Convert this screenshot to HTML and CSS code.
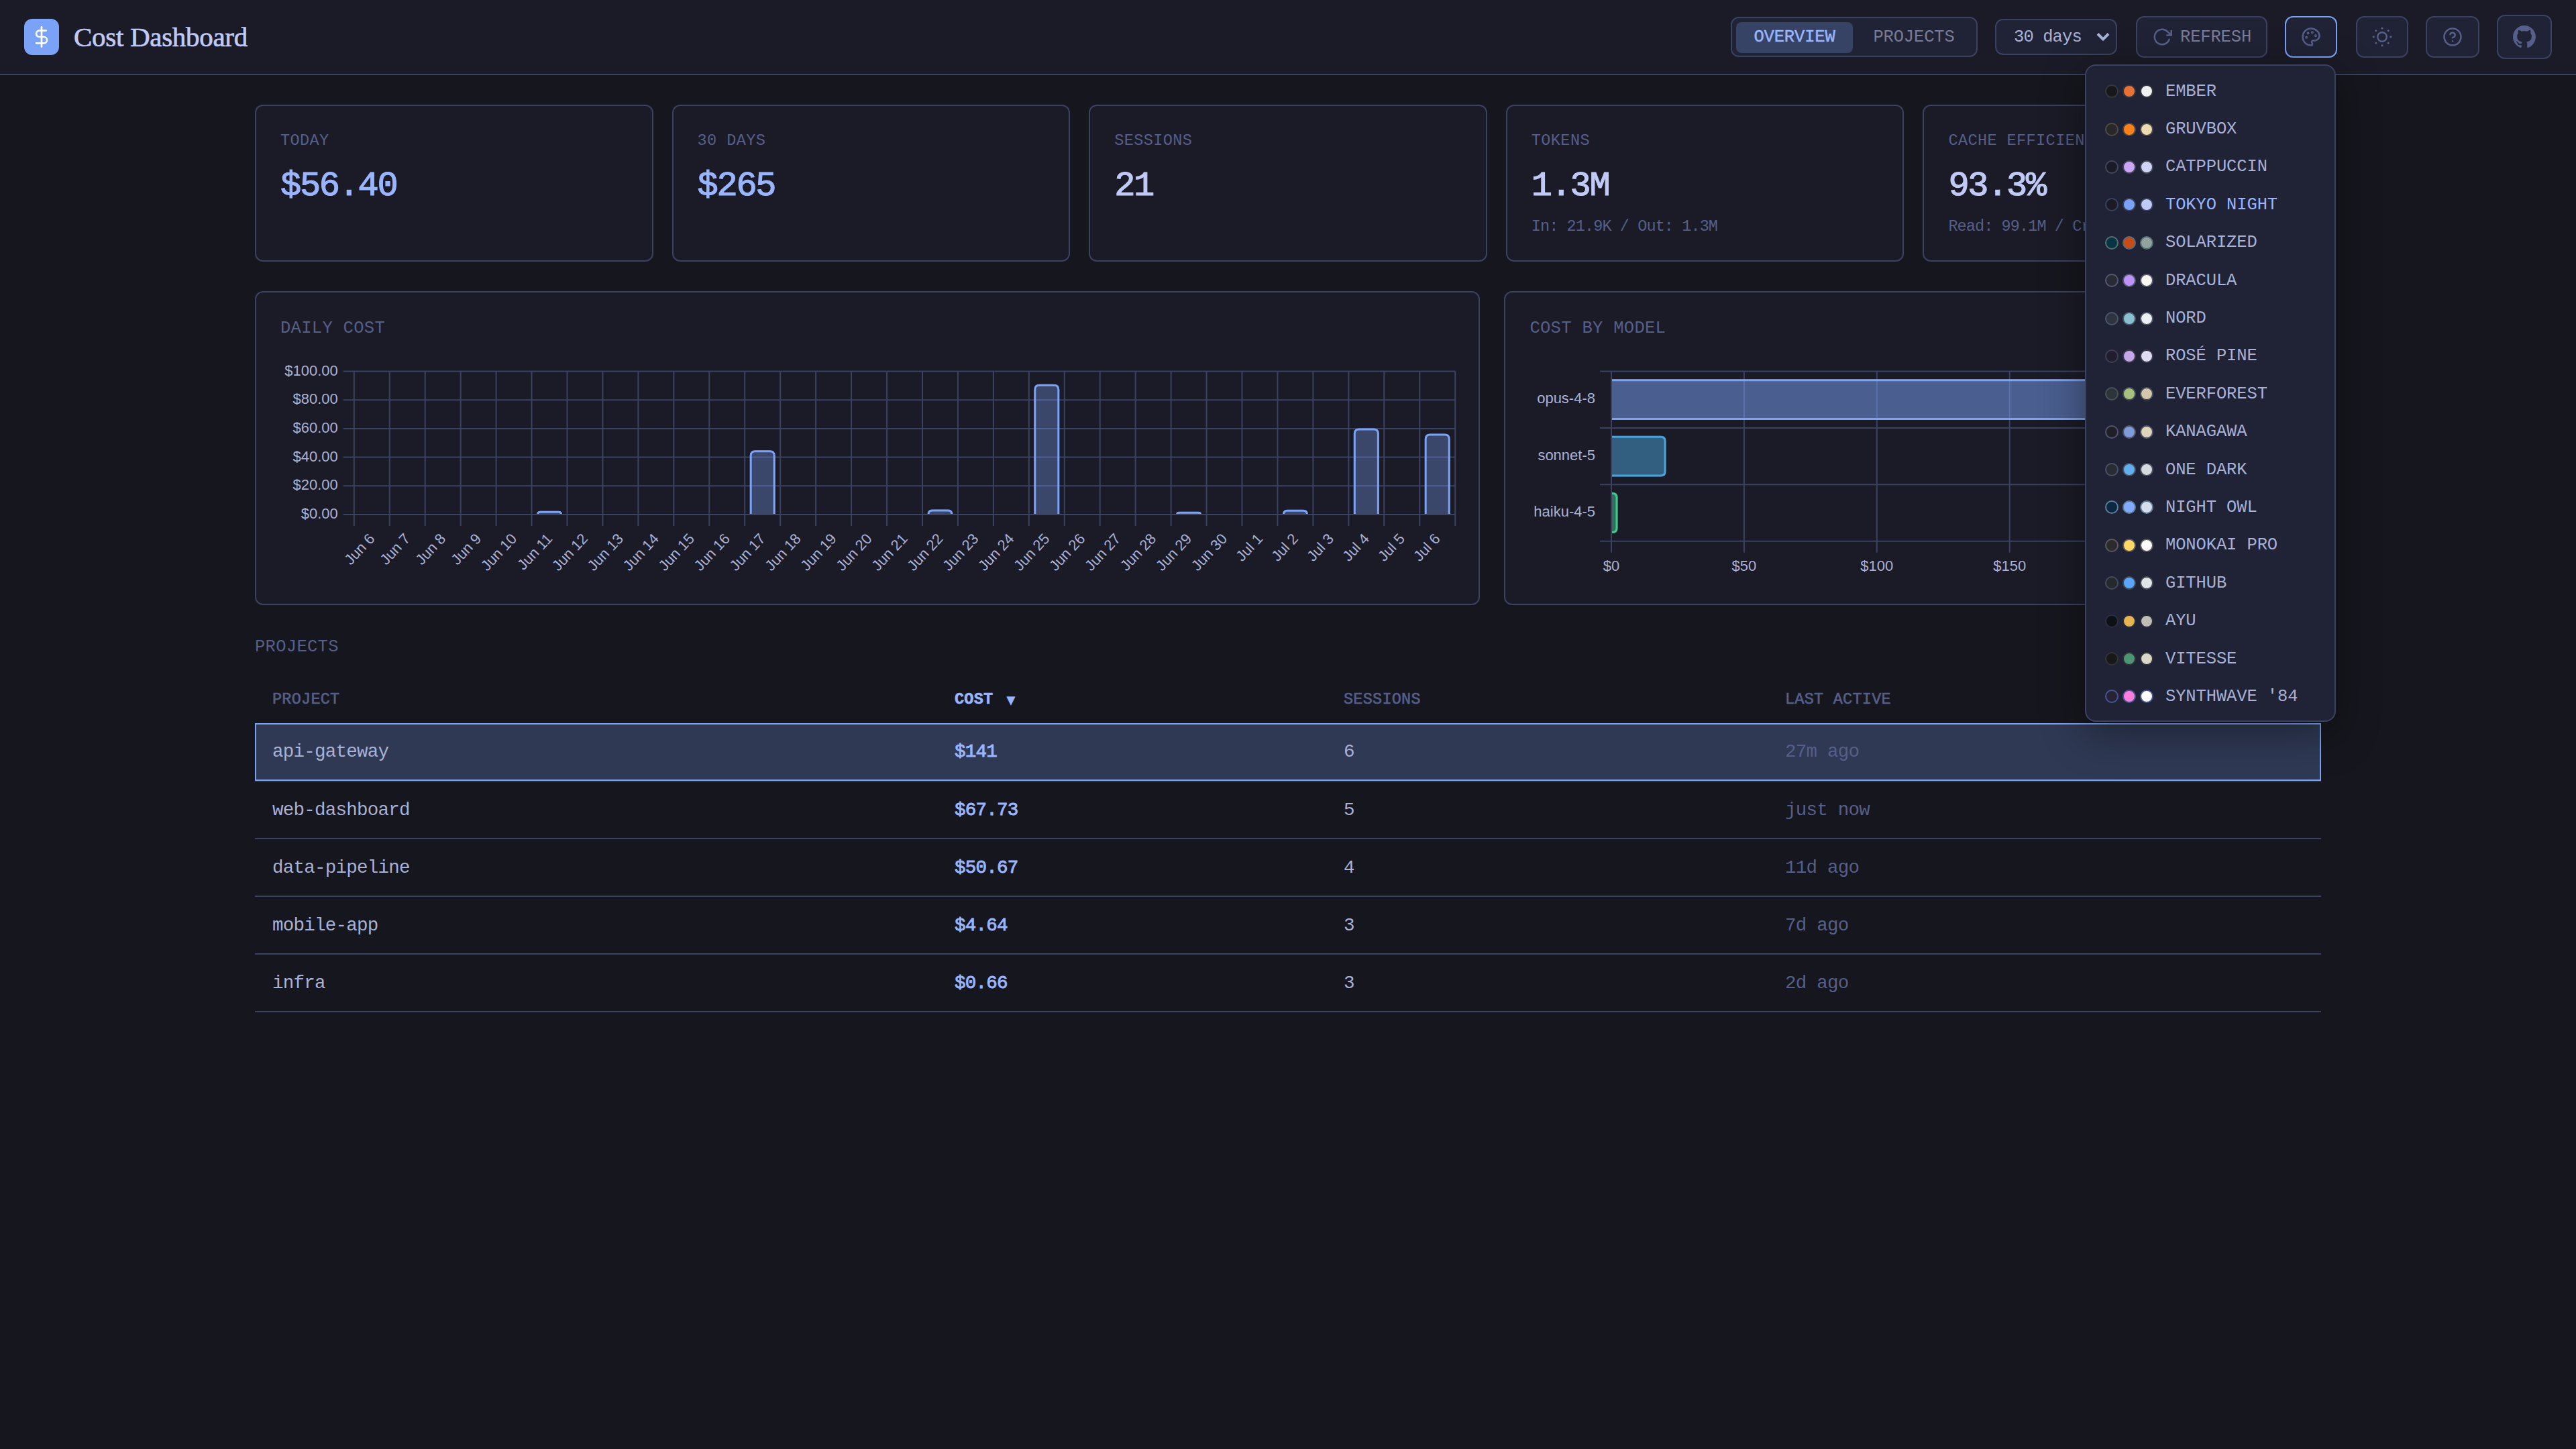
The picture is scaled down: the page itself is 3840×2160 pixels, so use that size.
FILE: index.html
```html
<!DOCTYPE html>
<html lang="en">
<head>
    <meta charset="UTF-8">
    <meta name="viewport" content="width=device-width, initial-scale=1.0">
    <title>Cost Dashboard</title>
    <link rel="stylesheet" href="styles.css">
</head>
<body>
    <header class="header">
        <div class="brand">
            <div class="logo">
                <svg width="32" height="32" viewBox="0 0 24 24" fill="none" stroke="currentColor" stroke-width="2" stroke-linecap="round" stroke-linejoin="round"><path d="M12 1v22"/><path d="M17 5H9.5a3.5 3.5 0 0 0 0 7h5a3.5 3.5 0 0 1 0 7H6"/></svg>
            </div>
            <h1 class="title">Cost Dashboard</h1>
        </div>
        <div class="controls">
            <div class="tabs">
                <button class="tab active">OVERVIEW</button>
                <button class="tab">PROJECTS</button>
            </div>
            <button class="range">30 days
                <svg width="20" height="14" viewBox="0 0 20 14" fill="none" stroke="currentColor" stroke-width="4"><path d="M2 2.5l8 8 8-8"/></svg>
            </button>
            <button class="refresh">
                <svg width="30" height="30" viewBox="0 0 24 24" fill="none" stroke="currentColor" stroke-width="2"><path d="M23 4v6h-6"/><path d="M20.49 15a9 9 0 1 1-2.12-9.36L23 10" stroke-linecap="round"/></svg>
                <span>REFRESH</span>
            </button>
            <div class="theme-picker">
                <button class="icon-button open">
                    <svg width="30" height="30" viewBox="0 0 24 24" fill="none" stroke="currentColor" stroke-width="2" stroke-linecap="round" stroke-linejoin="round"><circle cx="13.5" cy="6.5" r=".6"/><circle cx="17.5" cy="10.5" r=".6"/><circle cx="8.5" cy="7.5" r=".6"/><circle cx="6.5" cy="12.5" r=".6"/><path d="M12 2C6.5 2 2 6.5 2 12s4.5 10 10 10c.926 0 1.648-.746 1.648-1.688 0-.437-.18-.835-.437-1.125-.29-.289-.438-.652-.438-1.125a1.64 1.64 0 0 1 1.668-1.668h1.996c3.051 0 5.555-2.503 5.555-5.554C21.965 6.012 17.461 2 12 2z"/></svg>
                </button>
                <div class="theme-menu"></div>
            </div>
            <button class="icon-button">
                <svg width="30" height="30" viewBox="0 0 30 30" fill="currentColor"><circle cx="15" cy="15" r="6.8" fill="none" stroke="currentColor" stroke-width="2.4"/><path d="M13.6.8h2.8v2.8h-2.8zM13.6 26.4h2.8v2.8h-2.8zM.8 13.6h2.8v2.8H.8zM26.4 13.6h2.8v2.8h-2.8z"/><path d="M5.8 3.9l1.9 1.9-1.9 1.9-1.9-1.9zM24.2 3.9l1.9 1.9-1.9 1.9-1.9-1.9zM5.8 22.3l1.9 1.9-1.9 1.9-1.9-1.9zM24.2 22.3l1.9 1.9-1.9 1.9-1.9-1.9z"/></svg>
            </button>
            <button class="icon-button help">
                <svg width="30" height="30" viewBox="0 0 24 24" fill="none" stroke="currentColor" stroke-width="2" stroke-linecap="round" stroke-linejoin="round"><circle cx="12" cy="12" r="10"/><path d="M9.09 9a3 3 0 0 1 5.83 1c0 2-3 3-3 3"/><path d="M12 17h.01"/></svg>
            </button>
            <button class="icon-button github">
                <svg width="34" height="34" viewBox="0 0 16 16" fill="currentColor"><path d="M8 0C3.58 0 0 3.58 0 8c0 3.54 2.29 6.53 5.47 7.59.4.07.55-.17.55-.38 0-.19-.01-.82-.01-1.49-2.01.37-2.53-.49-2.69-.94-.09-.23-.48-.94-.82-1.13-.28-.15-.68-.52-.01-.53.63-.01 1.08.58 1.23.82.72 1.21 1.87.87 2.33.66.07-.52.28-.87.51-1.07-1.78-.2-3.64-.89-3.64-3.95 0-.87.31-1.59.82-2.15-.08-.2-.36-1.02.08-2.12 0 0 .67-.21 2.2.82.64-.18 1.32-.27 2-.27s1.36.09 2 .27c1.53-1.04 2.2-.82 2.2-.82.44 1.1.16 1.92.08 2.12.51.56.82 1.27.82 2.15 0 3.07-1.87 3.75-3.65 3.95.29.25.54.73.54 1.48 0 1.07-.01 1.93-.01 2.2 0 .21.15.46.55.38A8.01 8.01 0 0 0 16 8c0-4.42-3.58-8-8-8z"/></svg>
            </button>
        </div>
    </header>

    <main class="main">
        <section class="stats">
            <div class="card">
                <p class="label">TODAY</p>
                <p class="value cost">$56.40</p>
            </div>
            <div class="card">
                <p class="label">30 DAYS</p>
                <p class="value cost">$265</p>
            </div>
            <div class="card">
                <p class="label">SESSIONS</p>
                <p class="value">21</p>
            </div>
            <div class="card">
                <p class="label">TOKENS</p>
                <p class="value">1.3M</p>
                <p class="sub">In: 21.9K / Out: 1.3M</p>
            </div>
            <div class="card">
                <p class="label">CACHE EFFICIENCY</p>
                <p class="value">93.3%</p>
                <p class="sub">Read: 99.1M / Create: 7.1M</p>
            </div>
        </section>

        <section class="charts">
            <div class="card chart-card">
                <h2 class="section-title">DAILY COST</h2>
                <svg class="chart" id="daily-chart" width="1750" height="336"></svg>
            </div>
            <div class="card chart-card">
                <h2 class="section-title">COST BY MODEL</h2>
                <svg class="chart" id="model-chart" width="1140" height="336"></svg>
            </div>
        </section>

        <h2 class="section-title">PROJECTS</h2>
        <table class="projects">
            <thead>
                <tr>
                    <th class="col-project">PROJECT</th>
                    <th class="col-cost sorted">COST <span class="arrow">▼</span></th>
                    <th class="col-sessions">SESSIONS</th>
                    <th class="col-active">LAST ACTIVE</th>
                </tr>
            </thead>
            <tbody>
                <tr class="selected"><td>api-gateway</td><td class="money">$141</td><td>6</td><td class="ago">27m ago</td></tr>
                <tr><td>web-dashboard</td><td class="money">$67.73</td><td>5</td><td class="ago">just now</td></tr>
                <tr><td>data-pipeline</td><td class="money">$50.67</td><td>4</td><td class="ago">11d ago</td></tr>
                <tr><td>mobile-app</td><td class="money">$4.64</td><td>3</td><td class="ago">7d ago</td></tr>
                <tr><td>infra</td><td class="money">$0.66</td><td>3</td><td class="ago">2d ago</td></tr>
            </tbody>
        </table>
    </main>
    <script src="script.js"></script>
</body>
</html>
```

FILE: styles.css
```css
*{
    padding: 0;
    margin: 0;
    box-sizing: border-box;
}
body{
    background-color: #16161e;
    color: #a9b1d6;
    font-family: "Liberation Mono", "Courier New", monospace;
    font-size: 27.5px;
    letter-spacing: -.75px;
    min-height: 100vh;
}
button{
    font: inherit;
    color: inherit;
    cursor: pointer;
}
svg{
    display: block;
    flex: none;
}

/* header */
.header{
    display: flex;
    justify-content: space-between;
    align-items: center;
    height: 112px;
    padding: 0 36px;
    background-color: #1b1b27;
    border-bottom: 2px solid #3b4261;
}
.brand{
    display: flex;
    align-items: center;
    gap: 22px;
}
.logo{
    display: flex;
    align-items: center;
    justify-content: center;
    width: 52px;
    height: 54px;
    border-radius: 12px;
    background-color: #7aa2f7;
    color: white;
}
.title{
    font-family: "Liberation Serif", "Times New Roman", serif;
    font-size: 41px;
    font-weight: normal;
    line-height: 54px;
    letter-spacing: -.3px;
    color: #c0caf5;
    -webkit-text-stroke: .7px #c0caf5;
}
.controls{
    display: flex;
    align-items: center;
    gap: 26px;
    font-size: 25.5px;
}
.tabs{
    display: flex;
    gap: 4px;
    width: 368px;
    height: 60px;
    padding: 6px;
    border: 2px solid #3b4261;
    border-radius: 12px;
    background-color: #1f2335;
}
.tab{
    width: 174px;
    height: 46px;
    border: none;
    border-radius: 8px;
    background-color: transparent;
    letter-spacing: -.15px;
    line-height: 44px;
    color: #787c99;
}
.tab.active{
    background-color: #364365;
    color: #9ab5ff;
    -webkit-text-stroke: .5px #9ab5ff;
}
.range{
    display: flex;
    align-items: center;
    justify-content: space-between;
    width: 182px;
    height: 54px;
    padding: 0 9px 0 26px;
    border: 2px solid #3b4261;
    border-radius: 12px;
    background-color: #1f2335;
    letter-spacing: -.9px;
}
.refresh{
    display: flex;
    align-items: center;
    gap: 12px;
    width: 196px;
    height: 62px;
    margin-left: 2px;
    padding-left: 22px;
    border: 2px solid #3b4261;
    border-radius: 12px;
    background-color: #1f2335;
    letter-spacing: -.15px;
    color: #565f89;
}
.refresh span{
    color: #787c99;
}
.icon-button{
    display: flex;
    align-items: center;
    justify-content: center;
    width: 78px;
    height: 62px;
    border: 2px solid #3b4261;
    border-radius: 12px;
    background-color: #1f2335;
    color: #565f89;
}
.icon-button.open{
    border-color: #7aa2f7;
}
.help{
    width: 80px;
}
.github{
    width: 82px;
    height: 66px;
}

/* theme menu */
.theme-picker{
    position: relative;
    margin-right: 2px;
}
.theme-menu{
    position: absolute;
    top: 72px;
    right: 2px;
    z-index: 10;
    width: 374px;
    height: 980px;
    padding: 10px 0 8px;
    border: 2px solid #3b4261;
    border-radius: 16px;
    background-color: #1f2335;
    box-shadow: 0 16px 64px rgba(0, 0, 0, .4);
}
.theme{
    display: flex;
    align-items: center;
    gap: 18px;
    height: 56.4px;
    padding-left: 28px;
    letter-spacing: -.12px;
    white-space: nowrap;
}
.theme.active{
    color: #9ab5ff;
}
.dots{
    display: flex;
    gap: 6px;
}
.dots i{
    width: 20px;
    height: 20px;
    border: 2px solid;
    border-radius: 50%;
}

/* cards */
.main{
    width: 3080px;
    margin: 0 auto;
    padding-top: 44px;
}
.stats{
    display: grid;
    grid-template-columns: repeat(5, 1fr);
    gap: 28px;
}
.card{
    min-width: 0;
    padding: 36px;
    border: 2px solid #3b4261;
    border-radius: 12px;
    background-color: #1b1b27;
}
.stats .card{
    height: 234px;
}
.label{
    font-size: 23.5px;
    line-height: 32px;
    letter-spacing: .42px;
    color: #565f89;
}
.value{
    margin-top: 22px;
    font-size: 52px;
    line-height: 60px;
    letter-spacing: -2.3px;
    color: #c0caf5;
    -webkit-text-stroke: 1.2px currentColor;
}
.value.cost{
    color: #9ab5ff;
}
.sub{
    margin-top: 14px;
    font-size: 23.5px;
    line-height: 32px;
    letter-spacing: -.9px;
    white-space: nowrap;
    color: #565f89;
}
.charts{
    display: grid;
    grid-template-columns: 3fr 2fr;
    gap: 36px;
    margin: 44px 0 45px;
}
.chart-card{
    height: 468px;
}
.section-title{
    font-size: 25.5px;
    font-weight: normal;
    line-height: 36px;
    letter-spacing: .3px;
    color: #565f89;
}
.chart{
    margin-top: 22px;
    overflow: visible;
    font-family: "Liberation Sans", Arial, sans-serif;
    font-size: 22px;
    letter-spacing: 0;
    fill: #a9b1d6;
}
.grid-line{
    stroke: #3b4261;
    stroke-width: 2;
}

/* projects table */
.projects{
    width: 100%;
    margin-top: 23px;
    border-collapse: collapse;
    table-layout: fixed;
}
.col-project{
    width: 1017px;
}
.col-cost{
    width: 580px;
}
.col-sessions{
    width: 658px;
}
th{
    height: 72px;
    padding: 0 26px;
    font-size: 23.5px;
    font-weight: normal;
    letter-spacing: .25px;
    text-align: left;
    color: #565f89;
    -webkit-text-stroke: .6px currentColor;
}
th.sorted{
    font-weight: bold;
    color: #9ab5ff;
}
.arrow{
    margin-left: 6px;
    font-family: "DejaVu Sans", sans-serif;
    font-size: 16px;
}
td{
    height: 86px;
    padding: 0 26px;
    border-bottom: 2px solid #3b4261;
}
.money{
    color: #9ab5ff;
    -webkit-text-stroke: .9px #9ab5ff;
}
.ago{
    color: #565f89;
}
.selected{
    background-color: #2f3954;
    outline: 2px solid #7aa2f7;
    outline-offset: -2px;
}
```

FILE: script.js
```js
// background, accent, text, border
const themes = [
    ['EMBER', '#17181b', '#e87137', '#f0f1f3', '#36373d'],
    ['GRUVBOX', '#282828', '#fe8019', '#ebdbb2', '#504945'],
    ['CATPPUCCIN', '#1a1a28', '#cba6f7', '#cdd6f4', '#45475a'],
    ['TOKYO NIGHT', '#1a1b26', '#7aa2f7', '#c0caf5', '#3b4261'],
    ['SOLARIZED', '#073642', '#cb4b16', '#93a1a1', '#586e75'],
    ['DRACULA', '#282a36', '#bd93f9', '#f8f8f2', '#565870'],
    ['NORD', '#2e3440', '#88c0d0', '#eceff4', '#4c566a'],
    ['ROSÉ PINE', '#1f1d2e', '#c4a7e7', '#e0def4', '#403d52'],
    ['EVERFOREST', '#2d353b', '#a7c080', '#d3c6aa', '#475258'],
    ['KANAGAWA', '#1f1f28', '#7e9cd8', '#dcd7ba', '#54546d'],
    ['ONE DARK', '#282c34', '#61afef', '#d7dae0', '#4b5263'],
    ['NIGHT OWL', '#0b2942', '#82aaff', '#d6deeb', '#5f7e97'],
    ['MONOKAI PRO', '#2d2a2e', '#ffd866', '#fcfcfa', '#5b595c'],
    ['GITHUB', '#24292e', '#58a6ff', '#e1e4e8', '#444c56'],
    ['AYU', '#0d1017', '#e6b450', '#bfbdb6', '#2b2f3b'],
    ['VITESSE', '#181818', '#4d9375', '#dbd7ca', '#333333'],
    ["SYNTHWAVE '84", '#262335', '#ff7edb', '#ffffff', '#495495']
];

document.querySelector('.theme-menu').innerHTML = themes.map(([name, bg, accent, text, border]) => {
    const dots = [bg, accent, text]
        .map(color => `<i style="background:${color};border-color:${border}"></i>`)
        .join('');
    const active = name === 'TOKYO NIGHT' ? ' active' : '';
    return `<div class="theme${active}"><span class="dots">${dots}</span>${name}</div>`;
}).join('');

function line(x1, y1, x2, y2){
    return `<line class="grid-line" x1="${x1}" y1="${y1}" x2="${x2}" y2="${y2}"/>`;
}

// daily cost
function drawDaily(){
    const costs = {5: 2.5, 11: 44.8, 16: 3.5, 19: 91, 23: 2, 26: 3.4, 27: .5, 28: 60.2, 30: 56.4};
    const left = 109.8, right = 1751.2, top = 23.5, bottom = 237;
    const step = (right - left) / 31;
    let svg = '';

    for (let i = 0; i <= 31; i++) {
        const x = left + step * i;
        svg += line(x, top, x, bottom + 17);
    }
    for (let i = 0; i <= 5; i++) {
        const y = bottom - (bottom - top) / 5 * i;
        svg += line(left - 16, y, right, y);
        svg += `<text x="${left - 24}" y="${y + 6}" text-anchor="end">$${i * 20}.00</text>`;
    }
    for (let i = 0; i < 31; i++) {
        const x = left + step * (i + .5);
        const day = i < 25 ? 'Jun ' + (i + 6) : 'Jul ' + (i - 24);
        svg += `<text transform="translate(${x + 5.5} ${bottom + 37}) rotate(-47)" text-anchor="end">${day}</text>`;

        if (costs[i]) {
            const h = (bottom - top) * costs[i] / 100;
            const y = bottom - h;
            const r = Math.min(8, h);
            const l = x - 19, w = 38, ri = Math.min(6.5, Math.max(h - 1.5, 0));
            svg += `<path fill="#7aa2f7" fill-opacity=".33" d="M${l} ${bottom}v${r - h}q0 ${-r} ${r} ${-r}h${w - 2 * r}q${r} 0 ${r} ${r}v${h - r}z"/>`;
            // nothing to outline on a bar thinner than its border
            if (h > 3) {
                svg += `<path fill="none" stroke="#7aa2f7" stroke-width="3" d="M${l + 1.5} ${bottom}V${y + 1.5 + ri}q0 ${-ri} ${ri} ${-ri}H${l + w - 1.5 - ri}q${ri} 0 ${ri} ${ri}V${bottom}"/>`;
            }
        }
    }
    svg += line(left, bottom, right, bottom);
    document.querySelector('#daily-chart').innerHTML = svg;
}

// cost by model
function drawModels(){
    const models = [
        ['opus-4-8', 243, '#7aa2f7'],
        ['sonnet-5', 20.6, '#4aa2da'],
        ['haiku-4-5', 2.4, '#41c88e']
    ];
    const left = 122, top = 23.5, row = 84.4, step = 197.9;
    const bottom = top + row * 3;
    let svg = '';

    for (let i = 0; i <= 5; i++) {
        const x = left + step * i;
        svg += line(x, top, x, bottom + 17);
        svg += `<text x="${x}" y="${bottom + 44}" text-anchor="middle">$${i * 50}</text>`;
    }
    for (let i = 0; i <= 3; i++) {
        const y = top + row * i;
        svg += line(left - 17, y, left + step * 5, y);
    }
    models.forEach(([name, cost, color], i) => {
        const y = top + row * i + 11.8;
        const w = cost / 50 * step;
        const r = Math.min(6.5, w - 1.5);
        svg += `<path fill="${color}" fill-opacity=".5" stroke="none" d="M${left} ${y}h${w - r}q${r} 0 ${r} ${r}v${60.8 - 2 * r}q0 ${r} ${-r} ${r}h${r - w}z"/>`;
        svg += `<path fill="none" stroke="${color}" stroke-width="3" d="M${left} ${y + 1.5}h${w - 1.5 - r}q${r} 0 ${r} ${r}v${57.8 - 2 * r}q0 ${r} ${-r} ${r}H${left}"/>`;
        svg += `<text x="${left - 24}" y="${y + 36}" text-anchor="end">${name}</text>`;
    });
    svg += line(left, top, left, bottom);
    document.querySelector('#model-chart').innerHTML = svg;
}

drawDaily();
drawModels();
```
